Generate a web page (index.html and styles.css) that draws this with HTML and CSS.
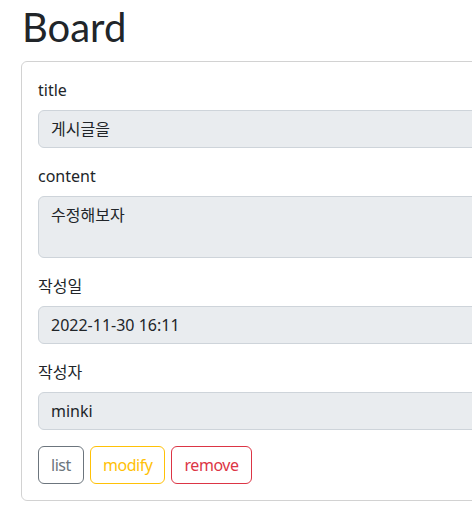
FILE: index.html
```html
<!DOCTYPE html>
<html lang="ko">
<head>
<meta charset="utf-8">
<link rel="stylesheet" href="styles.css">
</head>
<body>
<div class="container">
  <h1 class="title">Board</h1>
  <div class="card">
    <div class="card-body">
      <div class="field">
        <label class="form-label">title</label>
        <div class="form-control">게시글을</div>
      </div>
      <div class="field">
        <label class="form-label">content</label>
        <div class="form-control textarea">수정해보자</div>
      </div>
      <div class="field">
        <label class="form-label">작성일</label>
        <div class="form-control">2022-11-30 16:11</div>
      </div>
      <div class="field">
        <label class="form-label">작성자</label>
        <div class="form-control">minki</div>
      </div>
      <div class="buttons">
        <button class="btn btn-secondary">list</button>
        <button class="btn btn-warning">modify</button>
        <button class="btn btn-danger">remove</button>
      </div>
    </div>
  </div>
</div>
</body>
</html>
```

FILE: styles.css
```css
html { overflow: hidden; }
body {
  margin: 0;
  font-family: "Noto Sans", "Noto Sans CJK KR", sans-serif;
  font-size: 16px;
  line-height: 1.5;
  color: #212529;
  background: #fff;
}
.container {
  padding-left: 21px;
  width: 700px;
}
.title {
  margin: 0 0 8px 1px;
  padding-top: 2px;
  font-family: Lato, "Noto Sans", sans-serif;
  font-size: 40px;
  font-weight: 400;
  line-height: 51px;
}
.card {
  border: 1px solid rgba(0,0,0,0.175);
  border-radius: 6px;
}
.card-body {
  padding: 16px;
  display: flex;
  flex-direction: column;
}
.field {
  margin-bottom: 16px;
}
.form-label {
  display: block;
  margin-bottom: 8px;
}
.form-control {
  background: #e9ecef;
  border: 1px solid #ced4da;
  border-radius: 6px;
  padding: 6px 12px;
  height: 24px;
}
.form-control.textarea {
  height: 48px;
}
.buttons {
  display: flex;
  gap: 6px;
}
.btn {
  font-family: inherit;
  font-size: 16px;
  line-height: 1.5;
  letter-spacing: -0.45px;
  padding: 6px 12px;
  background: transparent;
  border: 1px solid;
  border-radius: 6px;
}
.btn-secondary { color: #6c757d; border-color: #6c757d; }
.btn-warning { color: #ffc107; border-color: #ffc107; }
.btn-danger { color: #dc3545; border-color: #dc3545; }
```
